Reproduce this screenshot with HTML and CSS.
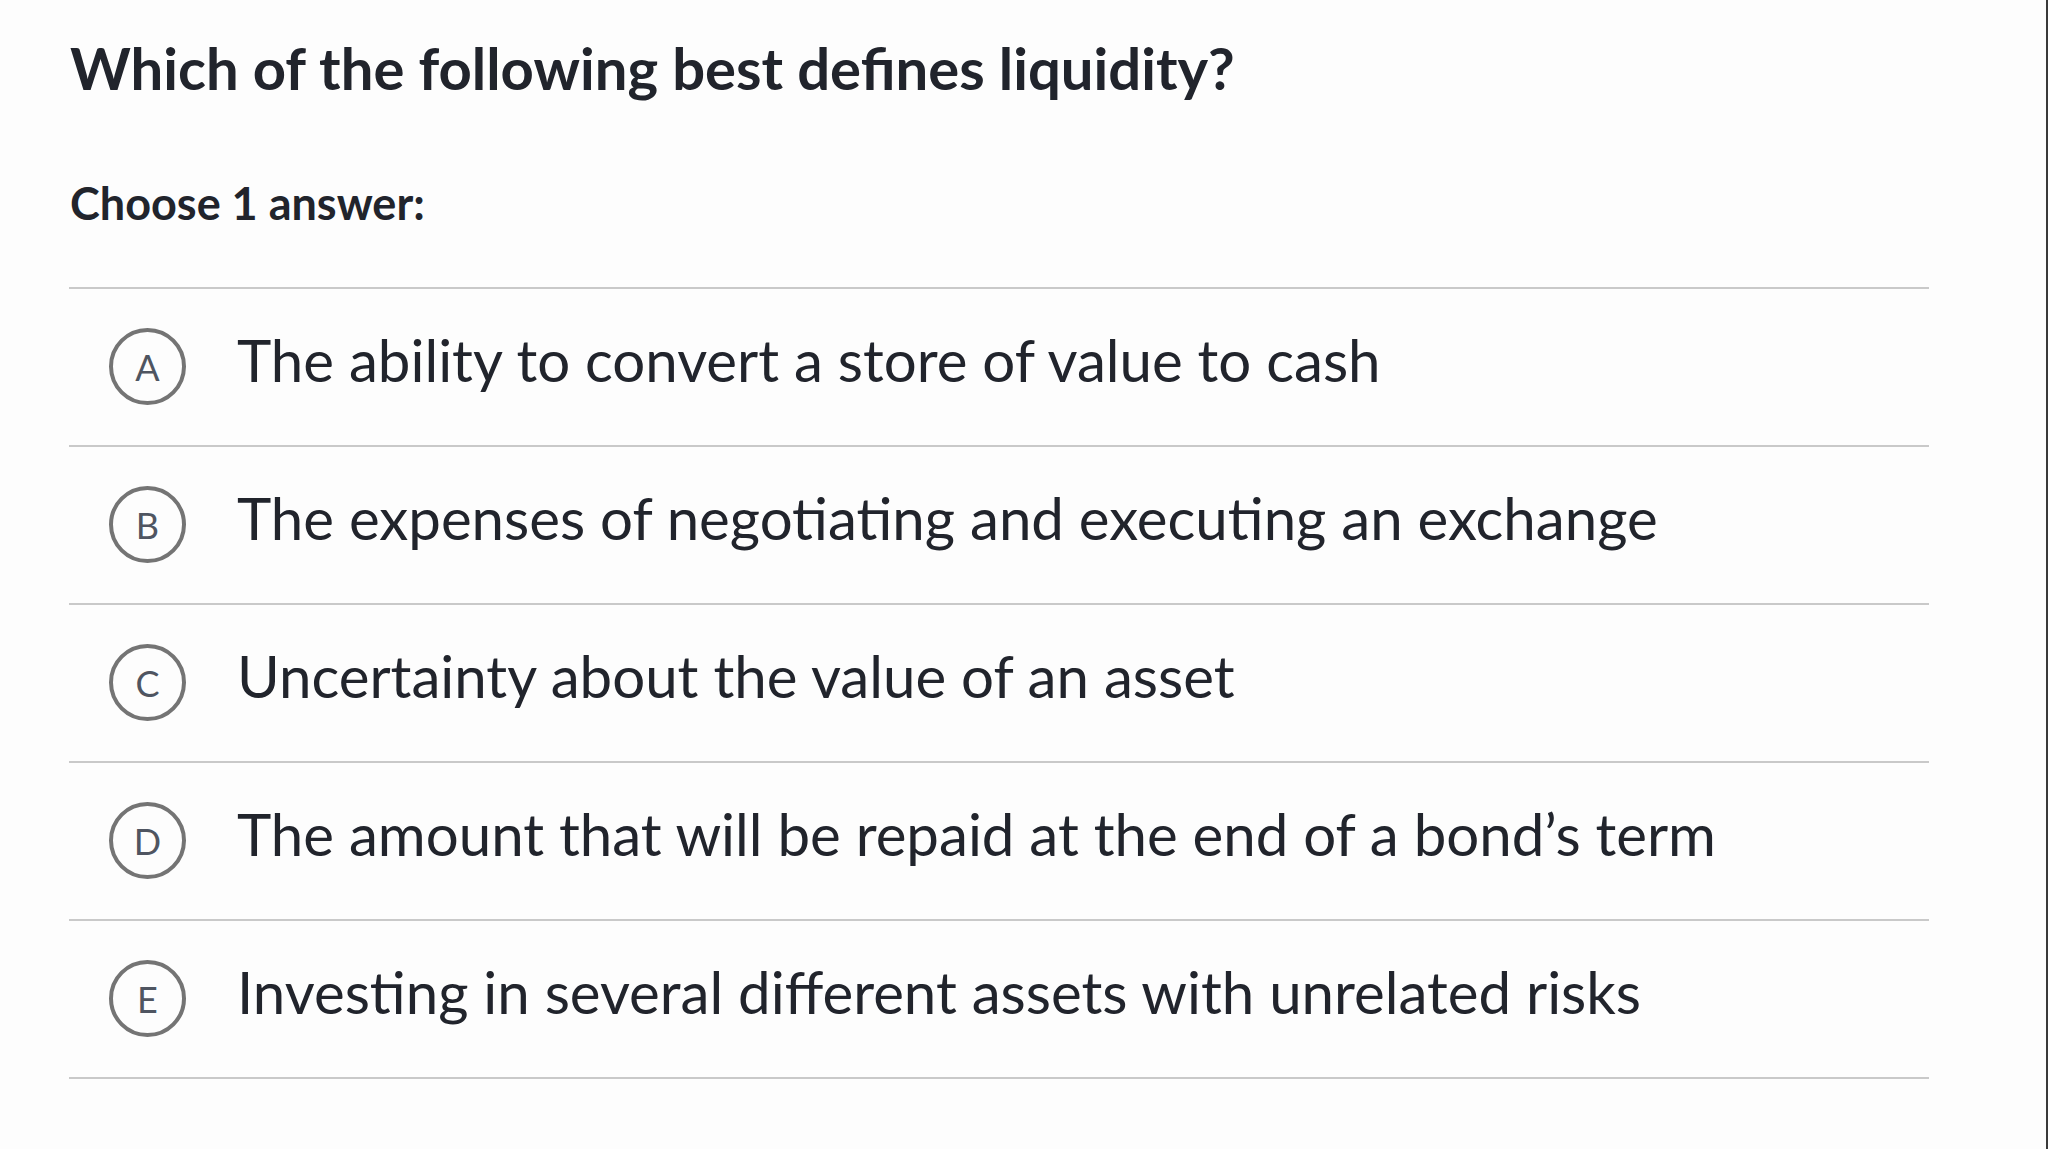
FILE: index.html
```html
<!DOCTYPE html>
<html lang="en">
<head>
<meta charset="utf-8">
<title>Question</title>
<link rel="stylesheet" href="styles.css">
</head>
<body>
<div class="page">
  <h1 class="question">Which of the following best defines liquidity?</h1>
  <div class="prompt">Choose 1 answer:</div>
  <ul class="choices">
    <li class="choice"><span class="badge">A</span><span class="text">The ability to convert a store of value to cash</span></li>
    <li class="choice"><span class="badge">B</span><span class="text">The expenses of negotiating and executing an exchange</span></li>
    <li class="choice"><span class="badge">C</span><span class="text">Uncertainty about the value of an asset</span></li>
    <li class="choice"><span class="badge">D</span><span class="text">The amount that will be repaid at the end of a bond’s term</span></li>
    <li class="choice"><span class="badge">E</span><span class="text">Investing in several different assets with unrelated risks</span></li>
  </ul>
</div>
</body>
</html>
```
FILE: styles.css
```css
html, body {
  margin: 0;
  padding: 0;
  background: #fdfdfd;
}
body {
  font-family: Lato, "Open Sans", sans-serif;
  color: #21242c;
  height: 1149px;
  box-sizing: border-box;
  border-right: 2px solid #3a3a3a;
  overflow: hidden;
}
.page {
  padding: 33px 0 0 69px;
  width: 1860px;
}
.question {
  margin: 0;
  font-size: 58px;
  font-weight: 700;
  line-height: 1.2;
  padding-left: 1px;
}
.prompt {
  margin-top: 73px;
  font-size: 45px;
  font-weight: 700;
  line-height: 1.2;
  padding-left: 1px;
}
.choices {
  list-style: none;
  margin: 57px 0 0 0;
  padding: 0;
}
.choice {
  display: flex;
  align-items: center;
  height: 156px;
  border-top: 2px solid #c9c9c9;
}
.choice:last-child {
  border-bottom: 2px solid #c9c9c9;
}
.badge {
  box-sizing: border-box;
  width: 77px;
  height: 77px;
  border: 4px solid #747474;
  border-radius: 50%;
  display: flex;
  align-items: center;
  justify-content: center;
  margin-left: 40px;
  font-size: 36px;
  color: #4f5561;
  line-height: 1;
  flex-shrink: 0;
}
.text {
  margin-left: 51px;
  font-size: 58.2px;
  line-height: 1.2;
  padding-bottom: 14px;
}
```
